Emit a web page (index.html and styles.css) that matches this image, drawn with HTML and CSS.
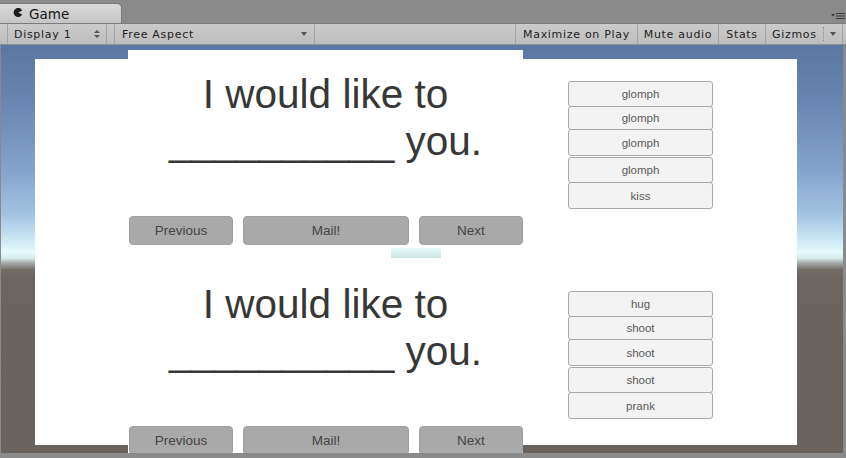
FILE: index.html
```html
<!DOCTYPE html>
<html lang="en">
<head>
<meta charset="utf-8">
<title>Game</title>
<link rel="stylesheet" href="styles.css">
</head>
<body>
<div class="window">
  <div class="tabbar">
    <div class="tab">
      <svg class="tab-icon" width="10" height="9" viewBox="0 0 10 9"><path d="M9.2 2.6 A4.5 4.5 0 1 0 9.2 6.4 L5.2 4.6 Z" fill="#1c1c1c"/></svg>
      <span>Game</span>
    </div>
    <svg class="tab-menu" width="14" height="8" viewBox="0 0 14 8"><path d="M0 2 L4 2 L2 4.5 Z" fill="#3a3a3a"/><rect x="5" y="1" width="9" height="1" fill="#3a3a3a"/><rect x="5" y="3.5" width="9" height="1" fill="#3a3a3a"/><rect x="5" y="6" width="9" height="1" fill="#3a3a3a"/></svg>
  </div>
  <div class="toolbar">
    <div class="tb-drop tb-display"><span>Display 1</span>
      <svg class="updown" width="6" height="8" viewBox="0 0 6 8"><path d="M0 3 L3 0 L6 3 Z M0 5 L3 8 L6 5 Z" fill="#555"/></svg>
    </div>
    <div class="tb-drop tb-aspect"><span>Free Aspect</span>
      <svg class="caret" width="6" height="4" viewBox="0 0 6 4"><path d="M0 0 L6 0 L3 4 Z" fill="#555"/></svg>
    </div>
    <div class="tb-spacer"></div>
    <div class="tb-btn tb-max">Maximize on Play</div>
    <div class="tb-btn tb-mute">Mute audio</div>
    <div class="tb-btn tb-stats">Stats</div>
    <div class="tb-btn tb-gizmos"><span class="gizmo-label">Gizmos</span><span class="gizmo-drop"><svg width="6" height="4" viewBox="0 0 6 4"><path d="M0 0 L6 0 L3 4 Z" fill="#555"/></svg></span></div>
  </div>
  <div class="gameview">
    <div class="canvas">
      <div class="column">
        <section class="panel">
          <p class="prompt"><span class="line">I would like to</span><span class="line">__________ you.</span></p>
          <div class="nav">
            <button class="btn btn-side">Previous</button>
            <button class="btn btn-mail">Mail!</button>
            <button class="btn btn-side">Next</button>
          </div>
        </section>
        <div class="hole"></div>
        <section class="panel">
          <p class="prompt"><span class="line">I would like to</span><span class="line">__________ you.</span></p>
          <div class="nav">
            <button class="btn btn-side">Previous</button>
            <button class="btn btn-mail">Mail!</button>
            <button class="btn btn-side">Next</button>
          </div>
        </section>
      </div>
      <div class="choices">
        <ul class="choice-list">
          <li>glomph</li>
          <li>glomph</li>
          <li>glomph</li>
          <li>glomph</li>
          <li>kiss</li>
        </ul>
        <ul class="choice-list">
          <li>hug</li>
          <li>shoot</li>
          <li>shoot</li>
          <li>shoot</li>
          <li>prank</li>
        </ul>
      </div>
    </div>
  </div>
</div>
</body>
</html>
```

FILE: styles.css
```css
* { box-sizing: border-box; }

body {
  margin: 0;
  width: 846px;
  height: 458px;
  overflow: hidden;
  background: #8a8a8a;
  font-family: "DejaVu Sans", sans-serif;
}

.window {
  display: flex;
  flex-direction: column;
}

/* ---------- tab bar ---------- */
.tabbar {
  height: 23px;
  display: flex;
  align-items: flex-end;
  justify-content: space-between;
}

.tab {
  width: 122px;
  height: 20px;
  background: linear-gradient(#d8d8d8, #c6c6c6);
  border: 1px solid #7a7a7a;
  border-left: 0;
  border-bottom: 0;
  border-radius: 0 5px 0 0;
  display: flex;
  align-items: center;
  padding-left: 13px;
  gap: 6px;
  font-size: 13.5px;
  color: #161616;
}

.tab-icon { margin-top: -2px; }

.tab-menu {
  margin: 0 1px 3px 0;
}

/* ---------- toolbar ---------- */
.toolbar {
  height: 22px;
  display: flex;
  align-items: stretch;
  padding: 0 3px 0 7px;
  background: linear-gradient(#cbcbcb, #bdbdbd);
  border-top: 1px solid #7c7c7c;
  border-bottom: 1px solid #8e8e8e;
  font-size: 11px;
  letter-spacing: 0.7px;
  color: #222222;
}

.tb-drop {
  display: flex;
  align-items: center;
  justify-content: space-between;
  border-left: 1px solid #a3a3a3;
  border-right: 1px solid #a3a3a3;
}

.tb-display {
  width: 100px;
  padding: 0 6px 0 6px;
}

.tb-aspect {
  width: 201px;
  margin-left: 7px;
  padding: 0 7px 0 7px;
}

.tb-spacer { flex: 1; }

.tb-btn {
  display: flex;
  align-items: center;
  justify-content: center;
  border-left: 1px solid #a3a3a3;
}

.tb-max { width: 122px; }
.tb-mute { width: 81px; }
.tb-stats { width: 47px; }

.tb-gizmos {
  width: 78px;
  border-right: 1px solid #a3a3a3;
  justify-content: flex-start;
  padding-left: 6px;
}

.gizmo-label { width: 51px; }

.gizmo-drop {
  flex: 1;
  height: 14px;
  display: flex;
  align-items: center;
  justify-content: center;
  border-left: 1px dotted #8c8c8c;
}

/* ---------- game view ---------- */
.gameview {
  height: 408px;
  margin: 0 3px 0 1px;
  overflow: hidden;
  background: linear-gradient(
    #5b77a1 0px,
    #6785b0 55px,
    #84a3cc 125px,
    #a3c3e2 170px,
    #cde9f5 195px,
    #e6fbfb 207px,
    #d9eded 213px,
    #a5aaa8 218px,
    #726b66 225px,
    #6b645f 235px,
    #69625d 408px
  );
}

.canvas {
  width: 762px;
  height: 386px;
  margin: 14px 0 0 34px;
  background: #ffffff;
  display: flex;
  align-items: flex-start;
}

.column {
  position: relative;
  width: 395px;
  height: 403px;
  margin: -9px 0 0 93px;
  background: #ffffff;
  overflow: hidden;
}

.panel {
  height: 210px;
  padding-top: 21px;
}

.prompt {
  margin: 0;
  font-family: "Liberation Sans", Arial, sans-serif;
  font-size: 40.5px;
  line-height: 47px;
  color: #373737;
  text-align: center;
}

.line { display: block; }

.nav {
  display: flex;
  gap: 10px;
  margin-top: 51px;
  padding-left: 1px;
}

.btn {
  height: 29px;
  padding: 0;
  font-family: "Liberation Sans", Arial, sans-serif;
  font-size: 13.5px;
  color: #454545;
  background: #a9a9a9;
  border: 1px solid #a0a0a0;
  border-radius: 4px;
}

.btn-side { width: 104px; }
.btn-mail { width: 166px; }

.hole {
  position: absolute;
  left: 263px;
  top: 198px;
  width: 50px;
  height: 10px;
  background: linear-gradient(#e6fbfb, #cde4e4);
}

/* ---------- word choices ---------- */
.choices {
  width: 145px;
  margin-left: 45px;
}

.choice-list {
  list-style: none;
  margin: 0;
  height: 210px;
  padding: 22px 0 0 0;
}

.choice-list li {
  display: flex;
  align-items: center;
  justify-content: center;
  background: #f3f3f3;
  border: 1px solid #a8a8a8;
  border-radius: 3px;
  font-family: "Liberation Sans", Arial, sans-serif;
  font-size: 11.5px;
  color: #5a5a5a;
}

.choice-list li:nth-child(1) { height: 26px; }
.choice-list li:nth-child(2) { height: 24px; margin-top: -1px; }
.choice-list li:nth-child(3) { height: 27px; margin-top: -1px; }
.choice-list li:nth-child(4) { height: 26px; margin-top: 1px; }
.choice-list li:nth-child(5) { height: 27px; margin-top: -1px; }
```
